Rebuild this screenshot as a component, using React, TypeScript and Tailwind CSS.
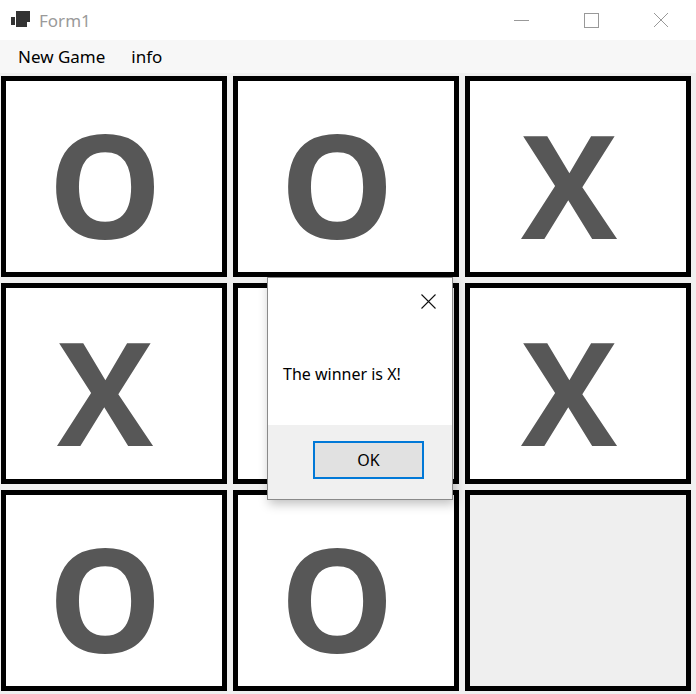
import React from "react";

const board: string[] = ["O", "O", "X", "X", "", "X", "O", "O", ""];

function FormIcon() {
  return (
    <svg width="20" height="18" viewBox="0 0 20 18" className="block">
      <rect x="0" y="6" width="4" height="8" fill="#333" />
      <rect x="5" y="0" width="14" height="11" fill="#333" />
      <rect x="8" y="11" width="8" height="5" fill="#333" />
      <rect x="5" y="11" width="3" height="5" fill="#333" />
    </svg>
  );
}

function Cell({ mark, blank }: { mark: string; blank: boolean }) {
  return (
    <div
      className={
        "border-[5px] border-black flex items-center justify-center min-h-0 " +
        (blank ? "bg-[#efefef]" : "bg-white")
      }
    >
      <span className="text-[144px] leading-[144px] font-bold text-[#575757] mt-[13px] mr-[18px] font-['Open_Sans',sans-serif]">
        {mark}
      </span>
    </div>
  );
}

export default function App() {
  return (
    <div className="relative w-[696px] h-[694px] bg-[#f0f0f0] overflow-hidden font-['Noto_Sans',sans-serif]">
      {/* title bar */}
      <div className="h-[40px] bg-white flex items-center">
        <div className="ml-[11px] mr-[8px]">
          <FormIcon />
        </div>
        <span className="text-[17px] text-[#9a9a9a] leading-none">Form1</span>
        <div className="ml-auto flex h-full">
          <div className="w-[70px] flex items-center justify-center">
            <div className="w-[15px] h-px bg-[#999]" />
          </div>
          <div className="w-[70px] flex items-center justify-center">
            <div className="w-[15px] h-[15px] border border-[#999]" />
          </div>
          <div className="w-[70px] flex items-center justify-center">
            <svg width="16" height="16" viewBox="0 0 16 16">
              <path d="M1 1 L15 15 M15 1 L1 15" stroke="#999" strokeWidth="1" />
            </svg>
          </div>
        </div>
      </div>

      {/* menu bar */}
      <div className="h-[33px] bg-[#f7f7f7] flex items-center text-[17px] text-black">
        <span className="ml-[18px]">New Game</span>
        <span className="ml-[26px]">info</span>
      </div>

      {/* board */}
      <div className="grid grid-cols-[226px_226px_226px] grid-rows-[201px_201px_201px] gap-x-[6px] gap-y-[6px] pl-[1px] pt-[3px]">
        {board.map((m, i) => (
          <Cell key={i} mark={m} blank={i === 8} />
        ))}
      </div>

      {/* message box */}
      <div className="absolute left-[267px] top-[277px] w-[186px] h-[223px] border border-[#8a8a8a] bg-[#f0f0f0] flex flex-col shadow-[2px_4px_10px_rgba(0,0,0,0.25)]">
        <div className="h-[147px] bg-white relative">
          <svg className="absolute left-[153px] top-[16px]" width="15" height="15" viewBox="0 0 15 15">
            <path d="M0.5 0.5 L14.5 14.5 M14.5 0.5 L0.5 14.5" stroke="#111" strokeWidth="1.1" />
          </svg>
          <div className="absolute left-[15px] top-[88px] text-[16px] leading-none text-black">
            The winner is X!
          </div>
        </div>
        <div className="flex-1 flex pt-[16px] pl-[45px]">
          <div className="w-[111px] h-[38px] border-2 border-[#0078d7] bg-[#e1e1e1] flex items-center justify-center text-[16px] text-black">
            OK
          </div>
        </div>
      </div>
    </div>
  );
}
